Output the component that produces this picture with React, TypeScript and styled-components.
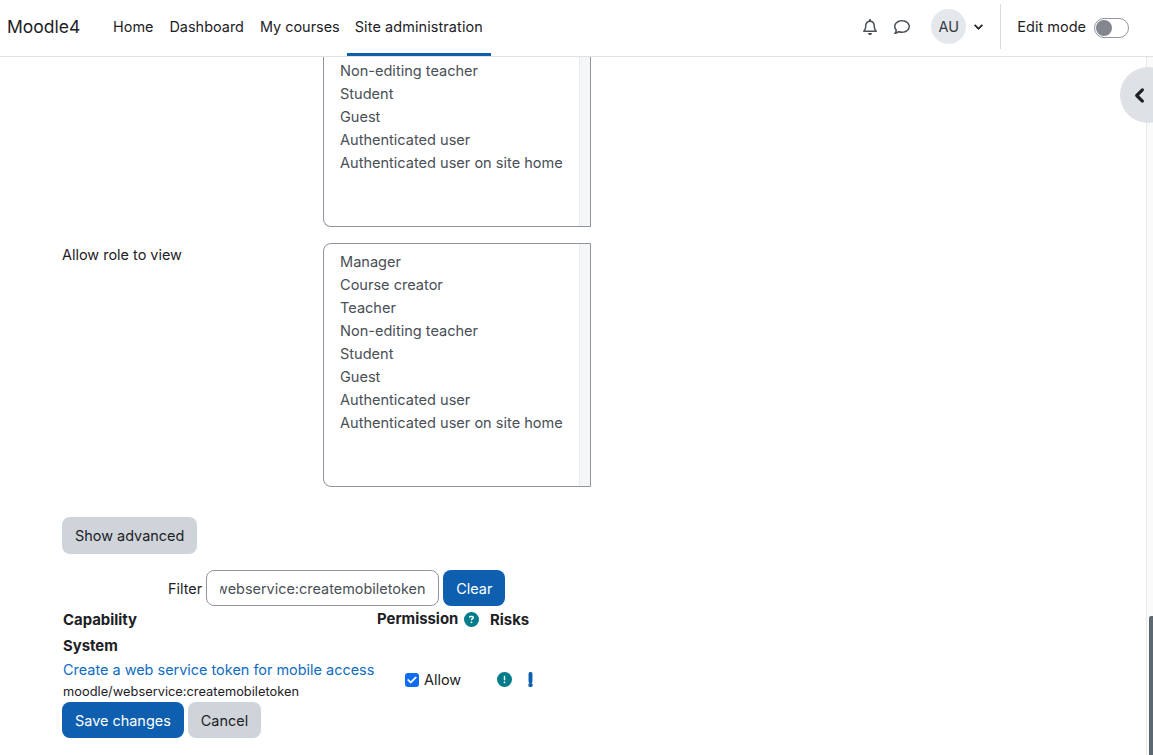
import React, { useEffect, useRef } from 'react';
import styled, { createGlobalStyle } from 'styled-components';
import { FaRegBell, FaRegComment, FaChevronDown, FaChevronLeft } from 'react-icons/fa6';
import { FaCircleQuestion, FaCircleExclamation, FaExclamation, FaCheck } from 'react-icons/fa6';

const Global = createGlobalStyle`
    html, body {
        margin:0;
        height:100%;
        overflow:hidden;
        background:#fff;
    }
    body {
        font-family:"Inter","Liberation Sans",sans-serif;
        font-size:15px;
        color:#1d2125;
    }
    * { box-sizing:border-box; }
`;

const Page = styled.div`
    width:1153px;
    height:755px;
    display:flex;
    flex-direction:column;
    position:relative;
    overflow:hidden;
`;

const Navbar = styled.header`
    height:57px;
    flex:none;
    display:flex;
    align-items:stretch;
    border-bottom:1px solid #dee2e6;
    padding:0 24px 0 7px;
`;

const Brand = styled.div`
    font-size:17.5px;
    line-height:54px;
    width:98px;
`;

const PrimaryNav = styled.nav`
    display:flex;
    flex:1;
`;

const NavLink = styled.a<{ $active?: boolean }>`
    padding:0 ${p => (p.$active ? 8 : 8)}px;
    margin-left:${p => (p.$active ? -1 : 0)}px;
    letter-spacing:${p => (p.$active ? 0.1 : 0)}px;
    line-height:54px;
    height:56px;
    font-size:14.45px;
    color:#1d2125;
    border-bottom:3px solid ${p => (p.$active ? '#0f5fb0' : 'transparent')};
`;

const UserArea = styled.div`
    display:flex;
    align-items:center;
    color:#444;
    padding-bottom:3px;
`;

const IconButton = styled.span`
    width:32px;
    height:20px;
    display:flex;
    align-items:center;
    justify-content:center;
    font-size:16px;
    color:#495057;
`;

const Avatar = styled.span`
    width:35px;
    height:35px;
    border-radius:50%;
    background:#e4e8ec;
    margin-left:13px;
    display:flex;
    align-items:center;
    justify-content:center;
    font-size:14.5px;
    color:#343a40;
`;

const Caret = styled.span`
    width:24px;
    display:flex;
    justify-content:center;
    font-size:9px;
    color:#1d2125;
    svg {
        stroke:currentColor;
        stroke-width:50;
    }
`;

const Divider = styled.span`
    width:1px;
    height:45px;
    background:#d5dade;
    margin:0 16px 0 10px;
`;

const EditLabel = styled.span`
    font-size:14.5px;
    color:#1d2125;
    margin-right:8px;
`;

const Switch = styled.span`
    width:35px;
    height:20px;
    border:1px solid #8f959e;
    border-radius:10px;
    padding:1px;
    margin-top:3px;
    display:flex;
`;

const Knob = styled.span`
    width:16px;
    height:16px;
    border-radius:50%;
    background:#81868f;
`;

const Body = styled.div`
    flex:1;
    display:flex;
    min-height:0;
`;

const Main = styled.main`
    flex:1;
    padding-left:62px;
    font-size:14.45px;
`;

const Rail = styled.div`
    width:7px;
    flex:none;
    background:#fafafa;
    border-left:1px solid #e8e8e8;
`;

const Thumb = styled.div`
    position:absolute;
    right:0;
    top:616px;
    bottom:0;
    width:4px;
    background:#5d676e;
    border-top-left-radius:2px;
`;

const DrawerToggle = styled.div`
    position:absolute;
    left:1120px;
    top:67px;
    width:56px;
    height:56px;
    border-radius:50%;
    background:#dee2e6;
    display:flex;
    align-items:center;
    padding-left:13px;
    font-size:15px;
    color:#1d2125;
    svg {
        stroke:currentColor;
        stroke-width:45;
    }
`;

const RoleRow = styled.div`
    display:grid;
    grid-template-columns:261px 268px;
    margin-bottom:16px;
`;

const RoleLabel = styled.div`
    padding-top:4px;
    line-height:16px;
    color:#1d2125;
`;

const ListBox = styled.div<{ $cut?: boolean; $h: number }>`
    height:${p => p.$h}px;
    border:1px solid #8f959e;
    border-top-width:${p => (p.$cut ? 0 : 1)}px;
    border-radius:${p => (p.$cut ? '0 0 0 8px' : '8px 0 0 8px')};
    padding:${p => (p.$cut ? 3 : 7)}px 0 0 16px;
    position:relative;
    overflow:hidden;
    color:#495057;
    font-size:14.55px;
    &::after {
        content:'';
        position:absolute;
        top:0;
        right:0;
        bottom:0;
        width:10px;
        background:#f5f6f8;
        border-left:1px solid #e9ebee;
    }
`;

const Option = styled.div`
    line-height:23px;
    height:23px;
    white-space:nowrap;
`;

const Button = styled.button<{ $primary?: boolean }>`
    height:36px;
    padding:0 13px;
    border:none;
    border-radius:8px;
    font:inherit;
    font-size:14.45px;
    background:${p => (p.$primary ? '#0f5fb0' : '#ced4da')};
    color:${p => (p.$primary ? '#fff' : '#1d2125')};
`;

const AdvancedButton = styled(Button)`
    height:37px;
`;

const AdvancedRow = styled.div`
    margin-top:30px;
`;

const FilterRow = styled.div`
    display:flex;
    align-items:center;
    gap:4px;
    margin-top:16px;
    padding-left:106px;
`;

const FilterInput = styled.input`
    width:233px;
    height:36px;
    border:1px solid #8f959e;
    border-radius:8px;
    padding:0 13px;
    font:inherit;
    font-size:14.45px;
    color:#495057;
    outline:none;
`;

const CapTable = styled.div`
    display:grid;
    grid-template-columns:314px 113px 1fr;
    padding-left:1px;
`;

const Heading = styled.div<{ $up?: boolean }>`
    font-weight:700;
    font-size:14.9px;
    line-height:18px;
    padding-top:${p => (p.$up ? 3 : 5)}px;
    display:flex;
    align-items:center;
    gap:6px;
`;

const Context = styled.div`
    grid-column:1 / -1;
    font-weight:700;
    font-size:14.9px;
    line-height:18px;
    padding-top:8px;
`;

const CapName = styled.div`
    padding-top:6px;
`;

const CapLink = styled.a`
    display:block;
    color:#0f6cbf;
    line-height:18px;
    white-space:nowrap;
`;

const CapCode = styled.div`
    margin-top:5px;
    font-size:12.85px;
    line-height:15px;
`;

const AllowCell = styled.label`
    display:flex;
    align-items:center;
    gap:5px;
    padding-left:28px;
    padding-top:5px;
`;

const CheckMark = styled.span`
    width:14px;
    height:14px;
    border-radius:3px;
    background:#0f6cf0;
    color:#fff;
    display:flex;
    align-items:center;
    justify-content:center;
    font-size:10px;
    svg {
        stroke:currentColor;
        stroke-width:30;
    }
`;

const RiskCell = styled.div`
    display:flex;
    align-items:center;
    gap:11px;
    padding-left:7px;
    padding-top:5px;
    font-size:15px;
`;

const RiskTeal = styled.span`
    color:#007c8a;
    display:flex;
`;

const RiskBlue = styled.span`
    color:#0f5fb0;
    display:flex;
    svg {
        stroke:currentColor;
        stroke-width:70;
    }
`;

const Actions = styled.div`
    display:flex;
    gap:4px;
    margin-top:3px;
`;

const HelpIcon = styled.span`
    color:#007c8a;
    display:flex;
    font-size:15px;
`;

const roles = ['Manager', 'Course creator', 'Teacher', 'Non-editing teacher', 'Student', 'Guest', 'Authenticated user', 'Authenticated user on site home'];

const App = () => {
    const filter = useRef<HTMLInputElement>(null);

    // input is scrolled to the end of its value
    useEffect(() => {
        if (filter.current) filter.current.scrollLeft = 9999;
    }, []);

    return (
        <Page>
            <Global />
            <Navbar>
                <Brand>Moodle4</Brand>
                <PrimaryNav>
                    <NavLink>Home</NavLink>
                    <NavLink>Dashboard</NavLink>
                    <NavLink>My courses</NavLink>
                    <NavLink $active>Site administration</NavLink>
                </PrimaryNav>
                <UserArea>
                    <IconButton><FaRegBell /></IconButton>
                    <IconButton><FaRegComment /></IconButton>
                    <Avatar>AU</Avatar>
                    <Caret><FaChevronDown /></Caret>
                    <Divider />
                    <EditLabel>Edit mode</EditLabel>
                    <Switch><Knob /></Switch>
                </UserArea>
            </Navbar>
            <Body>
                <Main>
                    <RoleRow>
                        <div />
                        <ListBox $cut $h={170}>
                            {roles.slice(3).map(r => <Option key={r}>{r}</Option>)}
                        </ListBox>
                    </RoleRow>
                    <RoleRow>
                        <RoleLabel>Allow role to view</RoleLabel>
                        <ListBox $h={244}>
                            {roles.map(r => <Option key={r}>{r}</Option>)}
                        </ListBox>
                    </RoleRow>
                    <AdvancedRow>
                        <AdvancedButton>Show advanced</AdvancedButton>
                    </AdvancedRow>
                    <FilterRow>
                        Filter
                        <FilterInput ref={filter} readOnly value="moodle/webservice:createmobiletoken" />
                        <Button $primary>Clear</Button>
                    </FilterRow>
                    <CapTable>
                        <Heading>Capability</Heading>
                        <Heading $up>Permission <HelpIcon><FaCircleQuestion /></HelpIcon></Heading>
                        <Heading>Risks</Heading>
                        <Context>System</Context>
                        <CapName>
                            <CapLink>Create a web service token for mobile access</CapLink>
                            <CapCode>moodle/webservice:createmobiletoken</CapCode>
                        </CapName>
                        <AllowCell>
                            <CheckMark><FaCheck /></CheckMark>
                            Allow
                        </AllowCell>
                        <RiskCell>
                            <RiskTeal><FaCircleExclamation /></RiskTeal>
                            <RiskBlue><FaExclamation /></RiskBlue>
                        </RiskCell>
                    </CapTable>
                    <Actions>
                        <Button $primary>Save changes</Button>
                        <Button>Cancel</Button>
                    </Actions>
                </Main>
                <Rail />
            </Body>
            <Thumb />
            <DrawerToggle><FaChevronLeft /></DrawerToggle>
        </Page>
    );
};

export default App;
